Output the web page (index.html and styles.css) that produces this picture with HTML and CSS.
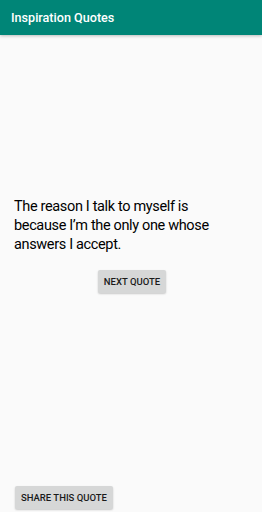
FILE: index.html
```html
<!DOCTYPE html>
<html>
<head>
<meta charset="utf-8">
<link rel="stylesheet" href="styles.css">
</head>
<body>
<div class="app">
  <header class="appbar">Inspiration Quotes</header>
  <main class="content">
    <div class="center">
      <p class="quote">The reason I talk to myself is because I’m the only one whose answers I accept.</p>
      <button class="btn">NEXT QUOTE</button>
    </div>
    <div class="bottom">
      <button class="btn">SHARE THIS QUOTE</button>
    </div>
  </main>
</div>
</body>
</html>
```
FILE: styles.css
```css
html, body {
  margin: 0;
  padding: 0;
  height: 100%;
}
body {
  font-family: Roboto, "Noto Sans", sans-serif;
  background: #fafafa;
}
.app {
  display: flex;
  flex-direction: column;
  height: 512px;
}
.appbar {
  height: 35px;
  background: #008577;
  color: #fff;
  font-weight: 500;
  font-size: 12.6px;
  display: flex;
  align-items: center;
  padding-left: 11px;
  box-shadow: 0 1px 3px rgba(0,0,0,0.25);
  position: relative;
  z-index: 1;
}
.content {
  flex: 1;
  display: flex;
  flex-direction: column;
  padding: 0 13px 3px 15px;
}
.center {
  flex: 1;
  display: flex;
  flex-direction: column;
  justify-content: center;
  align-items: center;
  padding-bottom: 32px;
}
.quote {
  margin: 0 12px 16px -1px;
  font-size: 14.5px;
  line-height: 19px;
  letter-spacing: -0.35px;
  color: #000;
  align-self: stretch;
}
.btn {
  font-family: Roboto, sans-serif;
  font-weight: 500;
  font-size: 9.5px;
  color: #1a1a1a;
  background: #d6d7d7;
  border: none;
  border-radius: 2px;
  height: 23px;
  padding: 0 6px;
  box-shadow: 0 1px 2px rgba(0,0,0,0.2);
}
.bottom {
  display: flex;
}
```
